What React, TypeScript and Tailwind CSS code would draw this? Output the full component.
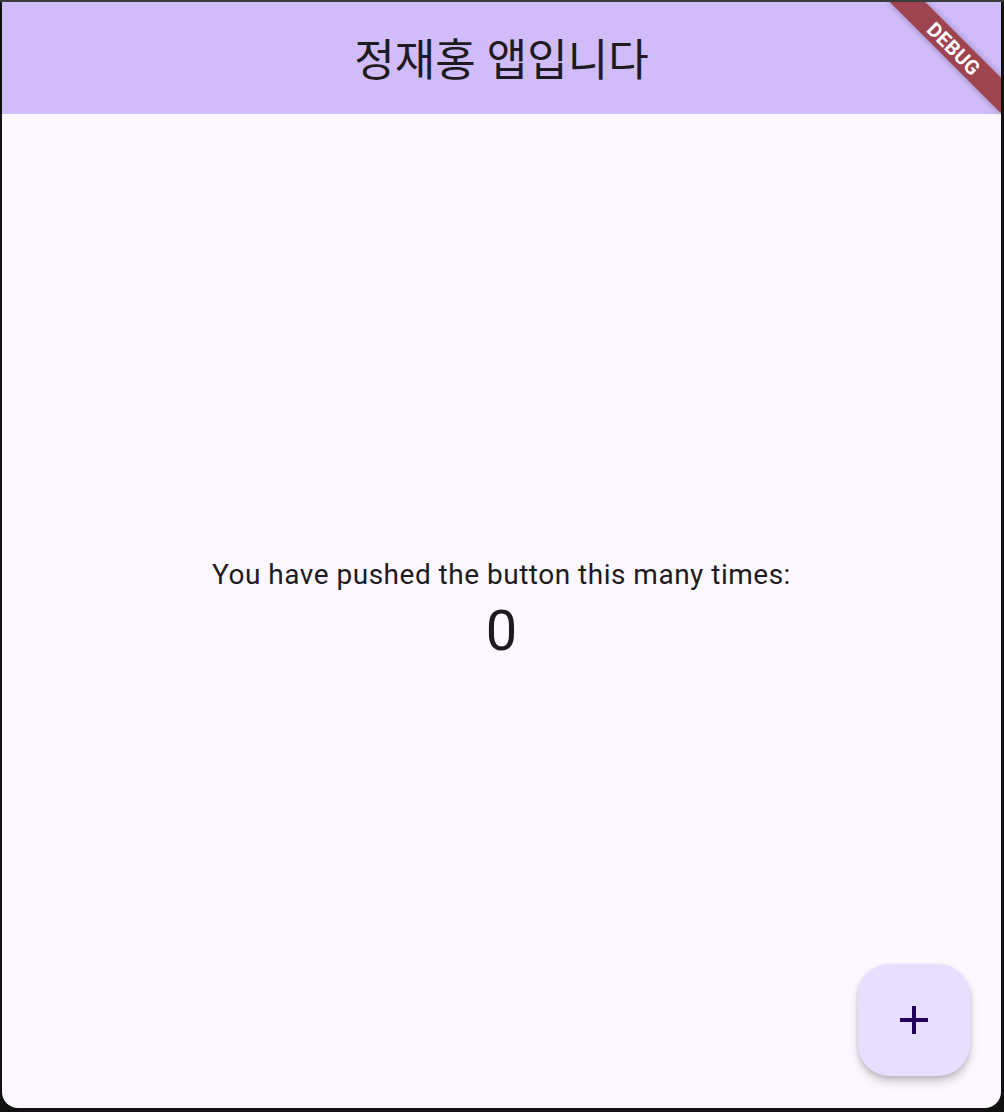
import React, { useState } from "react";

// Flutter counter demo rendered at 2x inside a dark window frame
const PlusIcon: React.FC = () => (
  <svg width="48" height="48" viewBox="0 0 24 24" fill="#21005d">
    <path d="M19 13h-6v6h-2v-6H5v-2h6V5h2v6h6v2z" />
  </svg>
);

const App: React.FC = () => {
  const [count, setCount] = useState<number>(0);

  return (
    <div className="w-[1004px] h-[1112px] bg-[#111111] flex flex-col">
      <div className="h-[2px] bg-[#3c3c3c]" />
      <div className="flex-1 flex pl-[2px] pr-[3px] pb-[4px]">
        <div className="relative flex-1 flex flex-col overflow-hidden rounded-b-[16px] bg-[#fdf7ff]">
          <header className="h-[112px] bg-[#d0bcf9] flex items-center justify-center">
            <h1
              className="text-[44px] leading-none text-[#1d1b20] pt-[6px]"
              style={{ fontFamily: "Roboto, 'Noto Sans CJK KR', sans-serif" }}
            >
              정재홍 앱입니다
            </h1>
          </header>

          <main
            className="flex-1 flex flex-col items-center justify-center"
            style={{ fontFamily: "Roboto, sans-serif" }}
          >
            <p className="text-[28px] leading-[40px] tracking-[0.5px] text-[#1d1b20]">
              You have pushed the button this many times:
            </p>
            <p className="text-[56px] leading-[72px] text-[#1d1b20]">{count}</p>
          </main>

          <button
            onClick={() => setCount(count + 1)}
            className="absolute right-[31px] bottom-[32px] w-[112px] h-[112px] rounded-[32px] bg-[#e8deff] flex items-center justify-center shadow-[0_6px_10px_rgba(0,0,0,0.18),0_2px_4px_rgba(0,0,0,0.12)]"
          >
            <PlusIcon />
          </button>

          {/* debug banner */}
          <div className="absolute top-[34px] right-[-33px] w-[160px] h-[25px] rotate-45 bg-[#9e4450] shadow-[0_0_6px_rgba(0,0,0,0.3)] flex items-center justify-center">
            <span
              className="text-[20px] font-bold text-white leading-none tracking-[0.3px]"
              style={{ fontFamily: "Roboto, sans-serif" }}
            >
              DEBUG
            </span>
          </div>
        </div>
      </div>
    </div>
  );
};

export default App;
